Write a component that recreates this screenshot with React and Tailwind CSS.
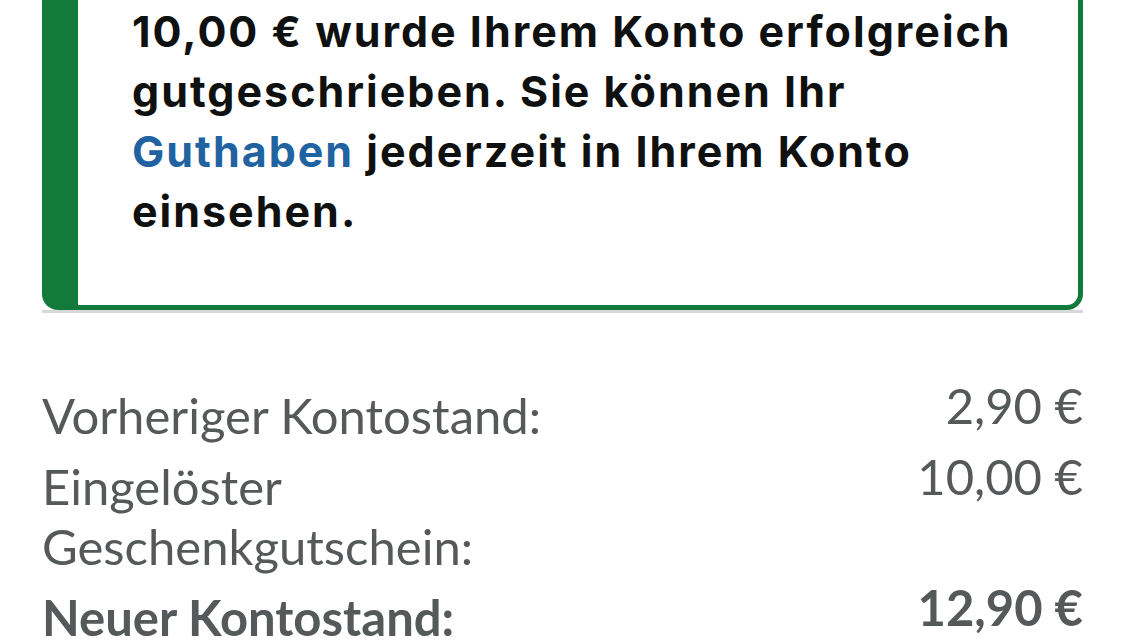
import React from "react";

const rows = [
  { label: "Vorheriger Kontostand:", value: "2,90 €" },
  { label: "Eingelöster Geschenkgutschein:", value: "10,00 €" },
  { label: "Neuer Kontostand:", value: "12,90 €", bold: true },
];

const App = () => {
  return (
    <div className="w-[1125px] h-[640px] overflow-hidden bg-white font-['Lato',sans-serif]">
      <div className="px-[42px]">
        {/* success box, top edge is scrolled off */}
        <div className="border-l-[36px] border-r-[5px] border-b-[5px] border-[#127b3c] rounded-bl-[16px] rounded-br-[16px] pl-[54px] pr-[40px] pt-[1px] pb-[64px]">
          <p className="font-['Inter',sans-serif] text-[43px] leading-[60px] tracking-[2px] font-bold text-[#0f1111]">
            10,00 € wurde Ihrem Konto erfolgreich gutgeschrieben. Sie können
            Ihr <span className="text-[#2162a1]">Guthaben</span> jederzeit in
            Ihrem Konto einsehen.
          </p>
        </div>
        <div className="h-[3px] bg-[#d5d9d9]"></div>

        <div className="mt-[72px] flex flex-col gap-[11px] text-[#565959]">
          {rows.map((row) => (
            <div key={row.label} className="flex justify-between items-start">
              <div
                className={
                  "w-[600px] text-[49px] leading-[60px] " +
                  (row.bold ? "font-bold" : "font-normal")
                }
              >
                {row.label}
              </div>
              <div
                className={
                  "text-right text-[49px] leading-[40px] " +
                  (row.bold ? "font-bold" : "font-normal")
                }
              >
                {row.value}
              </div>
            </div>
          ))}
        </div>
      </div>
    </div>
  );
};

export default App;
